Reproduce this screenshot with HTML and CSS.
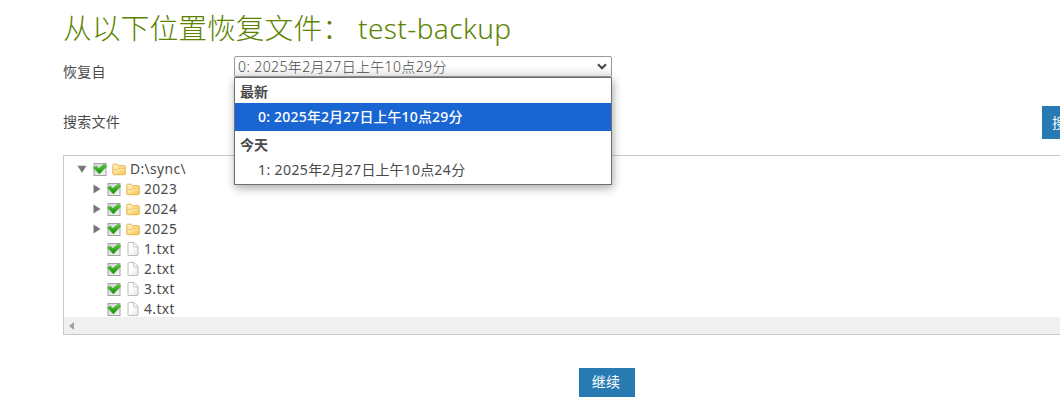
FILE: index.html
```html
<!DOCTYPE html>
<html lang="zh-CN">
<head>
<meta charset="utf-8">
<title>test-backup</title>
<link rel="stylesheet" href="styles.css">
</head>
<body>
<svg class="defs" width="0" height="0" aria-hidden="true">
  <defs>
    <linearGradient id="green" x1="0" y1="0" x2="0" y2="1"><stop offset="0" stop-color="#5bd03a"/><stop offset="1" stop-color="#15890c"/></linearGradient>
    <linearGradient id="box" x1="0" y1="0" x2="1" y2="1"><stop offset="0" stop-color="#d4d4da"/><stop offset="1" stop-color="#f6f6f6"/></linearGradient>
    <linearGradient id="gold" x1="0" y1="0" x2="1" y2="1"><stop offset="0" stop-color="#fff6cf"/><stop offset="1" stop-color="#f8c94c"/></linearGradient>
    <linearGradient id="paper" x1="0" y1="0" x2="1" y2="1"><stop offset="0.4" stop-color="#fff"/><stop offset="1" stop-color="#e6e6e6"/></linearGradient>
    <symbol id="check" viewBox="0 0 14 14"><rect x="1" y="1.5" width="12" height="12" fill="url(#box)" stroke="#a3a3a3"/><path d="M.5 5.7 3.5 4.2 5.8 6.4 11.3 2 13.8 4.2 6.4 12Z" fill="url(#green)" stroke="#35ab22" stroke-width=".6"/></symbol>
    <symbol id="folder" viewBox="0 0 14 14"><path d="M.8 11.5V3.2Q.8 2.2 1.8 2.2H5L6.3 3.7H12.2Q13.2 3.7 13.2 4.7V11.7Q13.2 12.7 12.2 12.7H1.8Q.8 12.7.8 11.5Z" fill="url(#gold)" stroke="#e8b048"/><path d="M1.5 8H5.5L7 6.3H12.8" fill="none" stroke="#efbb50"/><path d="M1.8 9H6L7.4 7.3H12.5" fill="none" stroke="#fff3c4" stroke-width=".8"/></symbol>
    <symbol id="file" viewBox="0 0 14 14"><path d="M2 1.5Q2 .5 3 .5H8L12 4.5V12.5Q12 13.5 11 13.5H3Q2 13.5 2 12.5Z" fill="url(#paper)" stroke="#bcbcbc"/><path d="M7.5.8V4Q7.5 5 8.5 5H11.8" fill="none" stroke="#c8c8c8"/></symbol>
    <symbol id="right" viewBox="0 0 8 10"><path d="M.5.5 7.5 5 .5 9.5Z" fill="#777"/></symbol>
    <symbol id="down" viewBox="0 0 10 8"><path d="M.5.7H9.5L5 7.8Z" fill="#777"/></symbol>
  </defs>
</svg>
<main class="page">
  <h1 class="title">从以下位置恢复文件：<span class="name">test-backup</span></h1>
  <div class="row version">
    <label class="label">恢复自</label>
    <div class="select">
      <span class="value"><i>0: 2025</i>年<i>2</i>月<i>27</i>日上午<i>10</i>点<i>29</i>分</span>
      <svg class="chevron" width="10" height="7" viewBox="0 0 10 7"><path d="M1 1.2 5 5.2 9 1.2" fill="none" stroke="#444" stroke-width="2.1"/></svg>
      <div class="menu">
        <div class="group">最新</div>
        <div class="option selected"><i>0: 2025</i>年<i>2</i>月<i>27</i>日上午<i>10</i>点<i>29</i>分</div>
        <div class="group second">今天</div>
        <div class="option"><i>1: 2025</i>年<i>2</i>月<i>27</i>日上午<i>10</i>点<i>24</i>分</div>
      </div>
    </div>
  </div>
  <div class="row search">
    <label class="label">搜索文件</label>
    <button class="button search-button">搜索</button>
  </div>
  <div class="tree">
    <div class="nodes">
      <div class="node root"><svg class="arrow open"><use href="#down"/></svg><svg class="icon"><use href="#check"/></svg><svg class="icon type"><use href="#folder"/></svg><i>D:\sync\</i></div>
      <div class="node"><svg class="arrow"><use href="#right"/></svg><svg class="icon"><use href="#check"/></svg><svg class="icon type"><use href="#folder"/></svg><i>2023</i></div>
      <div class="node"><svg class="arrow"><use href="#right"/></svg><svg class="icon"><use href="#check"/></svg><svg class="icon type"><use href="#folder"/></svg><i>2024</i></div>
      <div class="node"><svg class="arrow"><use href="#right"/></svg><svg class="icon"><use href="#check"/></svg><svg class="icon type"><use href="#folder"/></svg><i>2025</i></div>
      <div class="node"><span class="arrow"></span><svg class="icon"><use href="#check"/></svg><svg class="icon type"><use href="#file"/></svg><i>1.txt</i></div>
      <div class="node"><span class="arrow"></span><svg class="icon"><use href="#check"/></svg><svg class="icon type"><use href="#file"/></svg><i>2.txt</i></div>
      <div class="node"><span class="arrow"></span><svg class="icon"><use href="#check"/></svg><svg class="icon type"><use href="#file"/></svg><i>3.txt</i></div>
      <div class="node"><span class="arrow"></span><svg class="icon"><use href="#check"/></svg><svg class="icon type"><use href="#file"/></svg><i>4.txt</i></div>
    </div>
    <div class="scrollbar"><svg width="5" height="8" viewBox="0 0 5 8"><path d="M5 0V8L0 4Z" fill="#a0a0a0"/></svg></div>
  </div>
  <button class="button continue">继续</button>
</main>
</body>
</html>
```
FILE: styles.css
```css
* { box-sizing: border-box; }
body {
  margin: 0;
  height: 403px;
  overflow: hidden;
  background: #fff;
  color: #4a4a4a;
  font: 14px/20px "Noto Sans", "Noto Sans CJK SC", sans-serif;
}
i { font-style: normal; letter-spacing: .4px; white-space: pre; }
.defs { position: absolute; }
.page { width: 1090px; padding-left: 63px; }
.title {
  display: flex;
  height: 56px;
  margin: 0;
  color: #5b8300;
  font-size: 28.8px;
  font-weight: 300;
  line-height: 56px;
  white-space: nowrap;
}
.name { margin-left: 7px; font-size: 28px; letter-spacing: .4px; }
.row { display: flex; }
.label { width: 171px; letter-spacing: .3px; }
.version { height: 50px; }
.version .label { padding-top: 6px; }
.select {
  position: relative;
  display: flex;
  align-items: center;
  justify-content: space-between;
  width: 378px;
  height: 21px;
  padding: 0 4px 0 3px;
  border: 1px solid #999;
  border-radius: 2px;
  background: linear-gradient(#fff 40%, #eee);
}
.value { font-weight: 300; line-height: 19px; letter-spacing: .3px; }
.menu {
  position: absolute;
  z-index: 2;
  top: 20px;
  left: -1px;
  width: 378px;
  height: 108px;
  border: 1px solid #707070;
  background: #fff;
  box-shadow: 1px 3px 9px rgba(0, 0, 0, .35);
}
.group { height: 25px; padding-left: 5px; font-weight: 700; line-height: 27px; }
.group.second { height: 26px; line-height: 27px; }
.option { height: 27px; padding-left: 23px; line-height: 26px; }
.option.selected { height: 28px; background: #1966d2; color: #fff; font-weight: 500; line-height: 28px; }
.option.selected i { letter-spacing: .2px; }
.search { height: 49px; }
.search .label { width: 979px; padding-top: 6px; }
.button {
  border: 0;
  background: #277bb2;
  color: #fff;
  font: inherit;
}
.search-button { width: 48px; height: 33px; padding: 0 10px; }
.tree { height: 180px; border: 1px solid #c8c8c8; }
.nodes { height: 161px; padding-top: 3px; overflow: hidden; }
.node { display: flex; align-items: center; height: 20px; padding-left: 29px; }
.node i { line-height: 18px; padding-bottom: 1px; font-size: 13.8px; }
.node.root { padding-left: 13px; }
.arrow { width: 8px; height: 10px; margin-right: 6px; }
.arrow.open { width: 10px; height: 8px; }
.icon { width: 14px; height: 14px; }
.type { margin: 0 4px 0 5px; }
.scrollbar { display: flex; align-items: center; height: 17px; padding-left: 5px; background: #f0f0f0; }
.continue { display: block; width: 56px; height: 29px; margin: 33px 0 0 516px; padding: 0 2px 2px 0; letter-spacing: .3px; }
```
